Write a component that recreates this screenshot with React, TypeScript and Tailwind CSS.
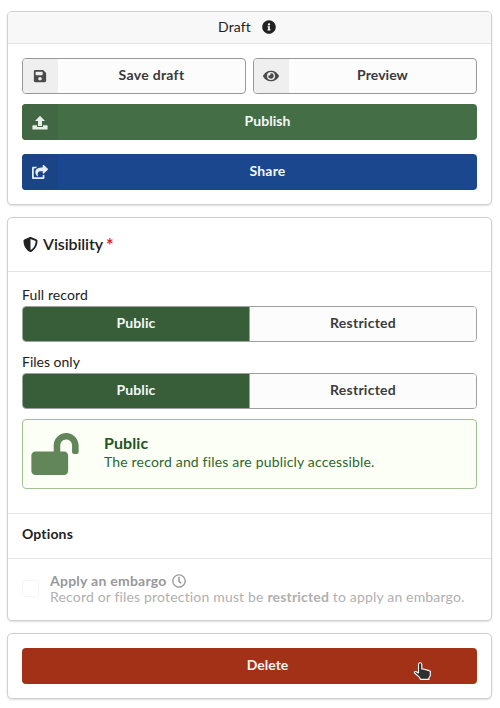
import type { ReactNode } from "react";
import {
  FaEye,
  FaInfoCircle,
  FaLockOpen,
  FaRegClock,
  FaSave,
  FaShareSquare,
  FaShieldAlt,
  FaUpload,
} from "react-icons/fa";

function Card({ className = "", children }: { className?: string; children: ReactNode }) {
  return (
    <section
      className={`overflow-hidden rounded-[5px] border border-[#d0d0d0] bg-white shadow-[0_1px_2px_0_rgba(34,36,38,0.15)] ${className}`}
    >
      {children}
    </section>
  );
}

function IconButton({
  icon,
  className,
  iconClassName,
  children,
}: {
  icon: ReactNode;
  className: string;
  iconClassName: string;
  children: ReactNode;
}) {
  return (
    <button className={`flex h-9 items-stretch overflow-hidden rounded-[4px] font-bold ${className}`}>
      <span className={`flex shrink-0 items-center justify-center ${iconClassName}`}>{icon}</span>
      <span className="flex flex-1 items-center justify-center pb-0.5">{children}</span>
    </button>
  );
}

function AccessToggle() {
  return (
    <div className="flex h-9 overflow-hidden rounded-[4px] border border-[#a0a0a0] font-bold">
      <button className="w-[226px] bg-[#385e39] pb-0.5 text-[#f5f8f5]">
        <span className="tracking-[0.1px]">Public</span>
      </button>
      <button className="flex-1 border-l border-[#a0a0a0] bg-[#fcfcfc] pb-0.5 text-[#3c3c3c]">
        <span className="tracking-[0.25px]">Restricted</span>
      </button>
    </div>
  );
}

export default function App() {
  return (
    <main className="flex h-[708px] w-[500px] flex-col gap-3 bg-white pt-[11px] pr-2 pl-[7px] font-['Lato','Open_Sans',sans-serif] text-[14px] leading-[18px] text-[#212121]">
      <Card className="h-[194px]">
        <header className="flex h-8 items-center justify-center gap-[11px] border-b border-[#e3e3e3] bg-[#f8f8f8] pr-[5px] pb-px">
          <span className="tracking-[0.1px]">Draft</span>
          <FaInfoCircle className="size-[14px]" />
        </header>
        <div className="flex flex-col px-[14px] pt-[14px]">
          <div className="grid grid-cols-2 gap-[7px]">
            <IconButton
              icon={<FaSave className="size-[14px]" />}
              className="border border-[#999] bg-[#fcfcfc] text-[#3a3a3a]"
              iconClassName="w-[35px] bg-[#efefef] pr-px text-[#4b4b4b]"
            >
              <span className="tracking-[0.3px]">Save draft</span>
            </IconButton>
            <IconButton
              icon={<FaEye className="size-4" />}
              className="border border-[#999] bg-[#fcfcfc] text-[#3a3a3a]"
              iconClassName="w-[35px] bg-[#efefef] pr-px text-[#4b4b4b]"
            >
              <span className="tracking-[0.05px]">Preview</span>
            </IconButton>
          </div>
          <IconButton
            icon={
              <svg className="h-[15px] w-4" viewBox="0 0 16 15" fill="currentColor">
                <path d="M8 .8 13 6h-3v5H6V6H3L8 .8Z" />
                <path d="M1 10.2h4v1.7h6v-1.7h4c.4 0 .6.2.6.6v3.1c0 .4-.2.6-.6.6H1c-.4 0-.6-.2-.6-.6v-3.1c0-.4.2-.6.6-.6Z" />
              </svg>
            }
            className="mt-[10px] bg-[#446e45] text-[#f5f8f5]"
            iconClassName="w-9 bg-[#426843] text-[#e8efe8]"
          >
            <span className="tracking-[0.05px]">Publish</span>
          </IconButton>
          <IconButton
            icon={<FaShareSquare className="size-4" />}
            className="mt-[14px] bg-[#1b478e] text-[#f5f8fc]"
            iconClassName="w-9 bg-[#1b4486] text-[#e6edf7]"
          >
            <span className="tracking-[0.2px]">Share</span>
          </IconButton>
        </div>
      </Card>

      <Card className="h-[404px]">
        <header className="flex h-[54px] items-center border-b border-[#e5e5e5] px-[15px] pb-px">
          <FaShieldAlt className="size-[15px]" />
          <h2 className="ml-[5px] text-[16px] font-semibold tracking-[-0.1px]">Visibility</h2>
          <span className="mt-0.5 ml-[3px] text-[18px] font-bold text-[#db2828]">*</span>
        </header>
        <div className="flex h-[241px] flex-col px-[14px] pt-[14px]">
          <label className="flex h-5 items-center pb-0.5 tracking-[0.1px]">Full record</label>
          <AccessToggle />
          <label className="mt-[11px] flex h-5 items-center pb-0.5">Files only</label>
          <AccessToggle />
          <div className="mt-[10px] flex h-[70px] items-center rounded-[4px] border border-[#a3c293] bg-[#fcfff5] text-[#2c662d]">
            <FaLockOpen className="ml-2 h-[42px] w-[48px] text-[#62865a]" />
            <div className="ml-[25px] pb-1">
              <h3 className="text-[16px] leading-5 font-bold tracking-[0.1px] text-[#1e561f]">Public</h3>
              <p className="tracking-[0.17px]">The record and files are publicly accessible.</p>
            </div>
          </div>
        </div>
        <h3 className="flex h-[46px] items-center border-y border-[#e5e5e5] px-[14px] pb-[5px] font-bold tracking-[0.15px]">
          Options
        </h3>
        <div className="flex h-[61px] items-center px-[14px] pb-0.5">
          <span className="size-[17px] rounded-[3px] border border-[#f6f6f6]" />
          <div className="ml-[11px] leading-4 text-[#b0b0b0]">
            <div className="flex items-center gap-[5px] font-bold text-[#999]">
              <span className="tracking-[0.25px]">Apply an embargo</span>
              <FaRegClock className="size-[14px]" />
            </div>
            <p className="tracking-[0.17px] whitespace-nowrap">
              Record or files protection must be <b>restricted</b> to apply an embargo.
            </p>
          </div>
        </div>
      </Card>

      <Card className="relative h-[66px] p-[14px]">
        <button className="h-9 w-full rounded-[4px] bg-[#a33118] pb-0.5 pl-9 font-bold text-[#faf4f2]">
          <span>Delete</span>
        </button>
        <svg className="absolute top-[27px] left-[405px] h-[20px] w-[20px]" viewBox="0 0 20 20">
          <path
            d="M7.2 1.8c1 0 1.6.7 1.6 1.7v4.4l2.5.4 2.2.6 2.1.5 1.7.9v4.5l-1.4 2.2v1.4H7.6L6 15.8 1.6 12c-.7-.8.2-1.8 1.3-1.4l2.6 1.3V3.5c0-1 .6-1.7 1.7-1.7Z"
            fill="#303030"
            stroke="#fff"
            strokeWidth="1.1"
            strokeLinejoin="round"
          />
        </svg>
      </Card>
    </main>
  );
}
